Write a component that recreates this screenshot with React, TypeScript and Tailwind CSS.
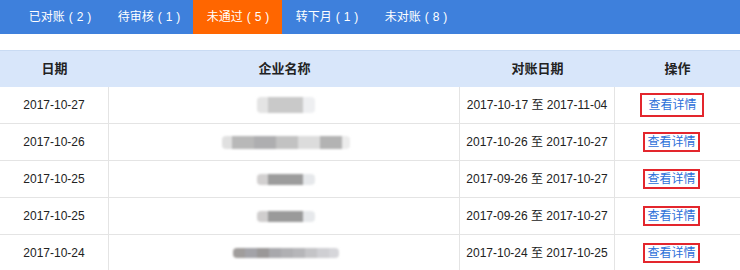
import React from "react";

const tabs = [
  { name: "已对账", count: 2, active: false },
  { name: "待审核", count: 1, active: false },
  { name: "未通过", count: 5, active: true },
  { name: "转下月", count: 1, active: false },
  { name: "未对账", count: 8, active: false },
];

// mosaic blocks standing in for the hidden company names
type Seg = [number, string];
const rows: { date: string; range: string; h: string; segs: Seg[] }[] = [
  {
    date: "2017-10-27",
    range: "2017-10-17 至 2017-11-04",
    h: "h-[16px]",
    segs: [[11, "#e4e4e4"], [35, "#c9c9c9"], [12, "#eeeff1"]],
  },
  {
    date: "2017-10-26",
    range: "2017-10-26 至 2017-10-27",
    h: "h-[13px]",
    segs: [[10, "#e0e0e0"], [22, "#b8b8b8"], [22, "#aeaeb0"], [22, "#c2c2c2"], [22, "#dcdcdc"], [22, "#b3b3b3"], [8, "#ececec"]],
  },
  {
    date: "2017-10-25",
    range: "2017-09-26 至 2017-10-27",
    h: "h-[11px]",
    segs: [[11, "#d2d0d0"], [35, "#9c9c9c"], [12, "#e6e8eb"]],
  },
  {
    date: "2017-10-25",
    range: "2017-09-26 至 2017-10-27",
    h: "h-[11px]",
    segs: [[11, "#d0cece"], [35, "#9a9a9a"], [12, "#e6e8eb"]],
  },
  {
    date: "2017-10-24",
    range: "2017-10-24 至 2017-10-25",
    h: "h-[10px]",
    segs: [[12, "#a09d9c"], [12, "#a3a3a8"], [12, "#9a9898"], [12, "#a8a8ac"], [12, "#b0b0b3"], [12, "#b6b6b9"], [12, "#c4c4c7"], [12, "#cfcfd3"], [10, "#d6d6da"]],
  },
];

const App: React.FC = () => {
  return (
    <div className="w-[740px] h-[270px] overflow-hidden bg-white text-[12px] text-[#222] font-['Liberation_Sans','Noto_Sans_CJK_SC',sans-serif]">
      {/* tabs */}
      <div className="h-[34px] bg-[#3e80dc] flex pl-[15px]">
        {tabs.map((t) => (
          <div
            key={t.name}
            className={`w-[89px] flex items-center justify-center text-white pl-[1px] ${
              t.active ? "bg-[#ff6600]" : ""
            }`}
          >
            <span>{t.name}</span>
            <span className="ml-[4px]">(</span>
            <span className="mx-[4px]">{t.count}</span>
            <span>)</span>
          </div>
        ))}
      </div>

      <div className="mt-4 border-t border-[#c9dbf3]">
        {/* header */}
        <div className="grid grid-cols-[109px_351px_155px_1fr] h-[36px] bg-[#d8e6fa] text-[13px] font-bold text-[#222]">
          <div className="flex items-center justify-center">日期</div>
          <div className="flex items-center justify-center">企业名称</div>
          <div className="flex items-center justify-center">对账日期</div>
          <div className="flex items-center justify-center">操作</div>
        </div>

        {rows.map((r, i) => (
          <div
            key={i}
            className="grid grid-cols-[109px_351px_155px_1fr] h-[37px] border-b border-[#e4e4e4]"
          >
            <div className="flex items-center justify-center border-r border-[#e4e4e4]">
              {r.date}
            </div>
            <div className="flex items-center justify-center border-r border-[#e4e4e4] pl-[3px]">
              <div className={`flex ${r.h} rounded-[4px] overflow-hidden blur-[1px]`}>
                {r.segs.map(([w, c], j) => (
                  <div key={j} className="h-full" style={{ width: w, background: c }} />
                ))}
              </div>
            </div>
            <div className="flex items-center justify-center border-r border-[#e4e4e4]">
              {r.range}
            </div>
            <div className="flex items-center justify-center pr-[12px]">
              <a
                href="#"
                className={`border-2 border-[#e3262d] flex items-center justify-center text-[12px] text-[#2c6fd9] ${
                  i === 0 ? "w-[64px] h-[24px] pl-[2px]" : "w-[57px] h-[20px]"
                }`}
              >
                查看详情
              </a>
            </div>
          </div>
        ))}
      </div>
    </div>
  );
};

export default App;
